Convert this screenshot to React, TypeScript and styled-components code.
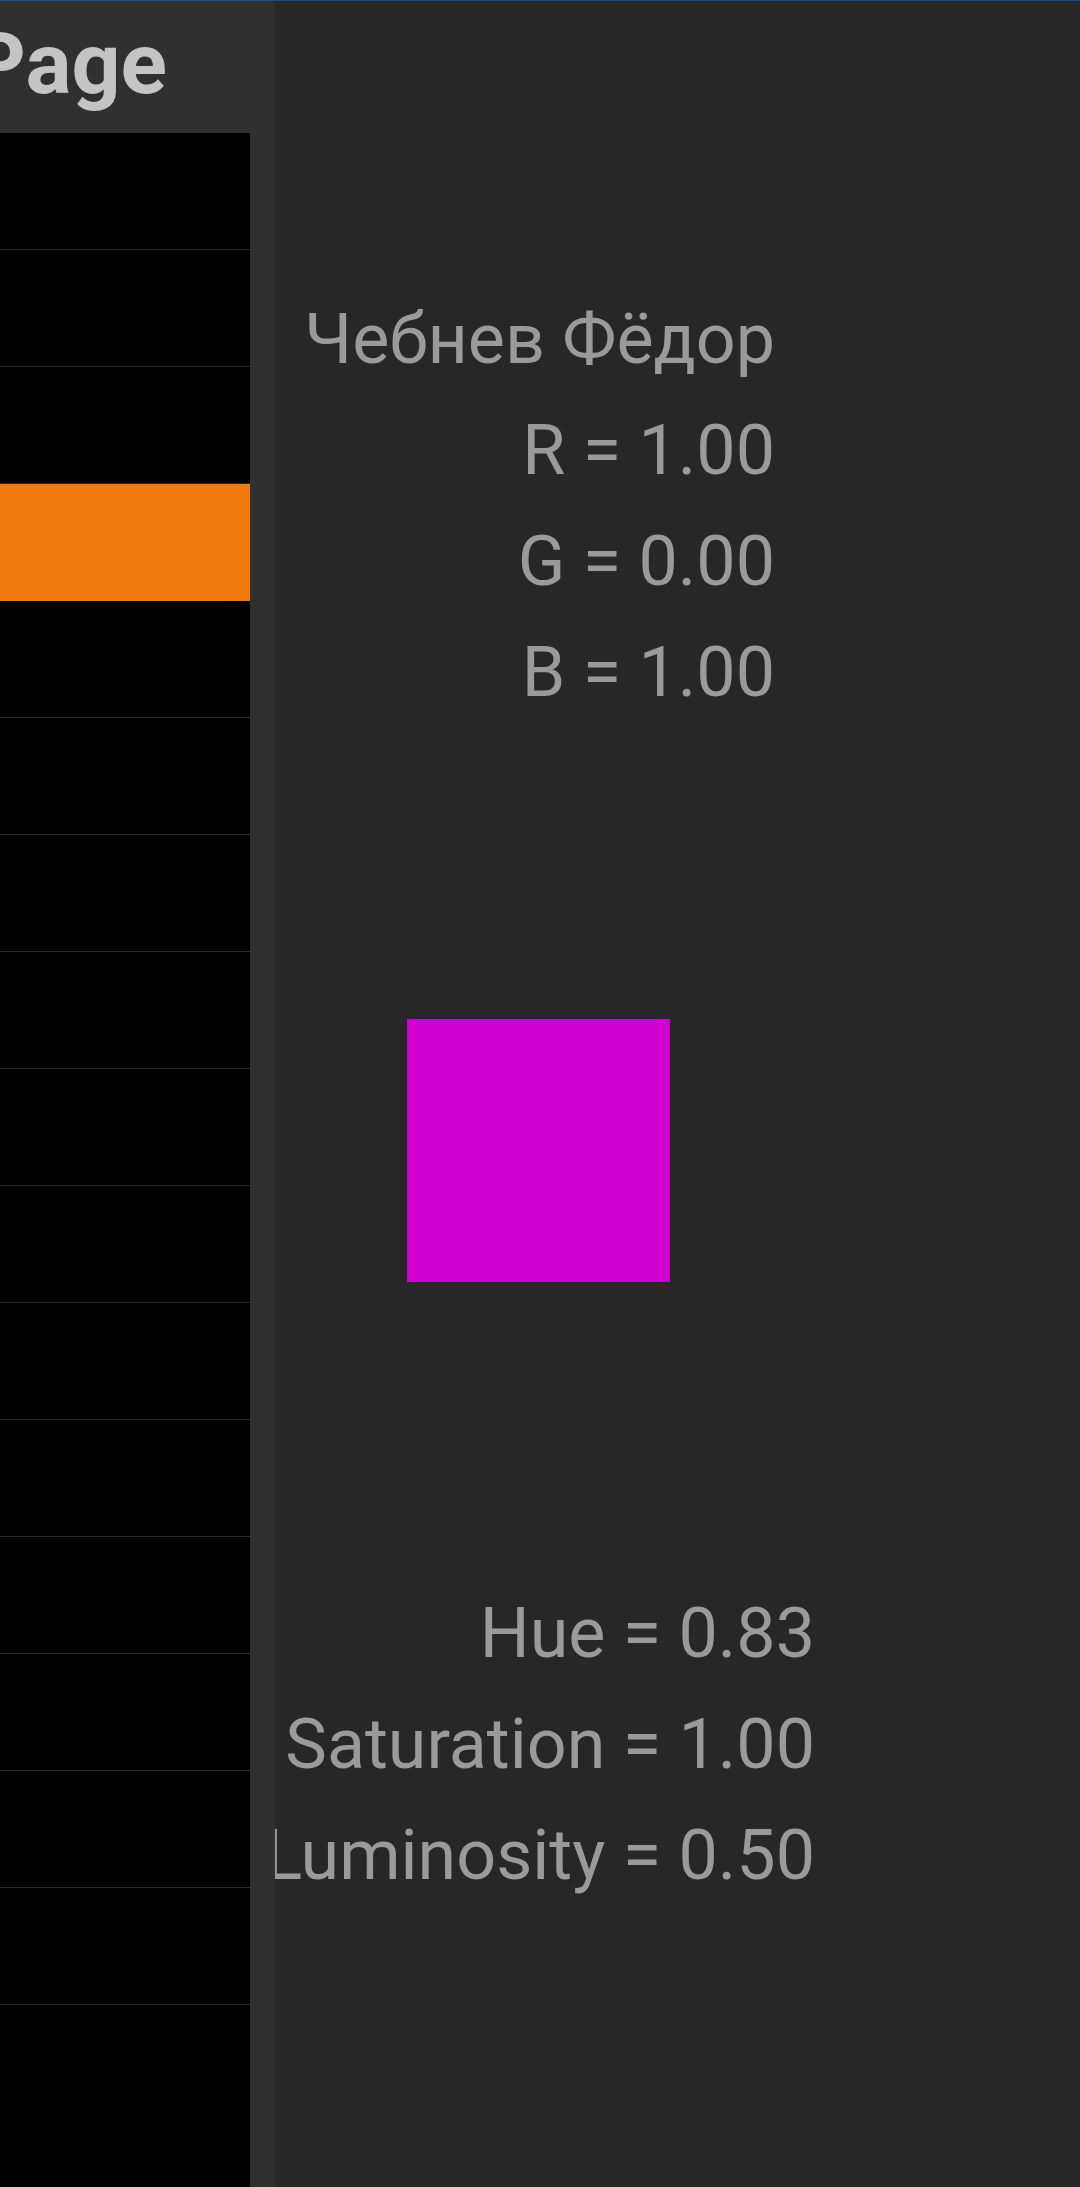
import React from "react";
import styled, { createGlobalStyle } from "styled-components";

const GlobalStyle = createGlobalStyle`
  html, body {
    margin: 0;
    padding: 0;
    background: #272727;
    overflow: hidden;
  }
  #root {
    height: 100vh;
  }
`;

const Screen = styled.div`
  display: flex;
  height: 100vh;
  box-sizing: border-box;
  border-top: 1px solid #1e4d8a;
  font-family: Roboto, "Noto Sans", "Liberation Sans", sans-serif;
  overflow: hidden;
`;

const Sidebar = styled.aside`
  flex: 0 0 275px;
  width: 275px;
  background: #303030;
  display: flex;
  flex-direction: column;
  overflow: hidden;
`;

const Header = styled.header`
  flex: 0 0 132px;
  height: 132px;
  box-sizing: border-box;
  display: flex;
  justify-content: flex-end;
  padding: 20px 108px 0 0;
  overflow: hidden;
`;

const Title = styled.h1`
  margin: 0;
  font-size: 86px;
  line-height: 1;
  font-weight: 700;
  color: #c4c4c4;
  white-space: nowrap;
  flex-shrink: 0;
`;

const List = styled.ul`
  margin: 0;
  padding: 0;
  list-style: none;
  width: 250px;
  flex: 1;
  background: #000;
  overflow: hidden;
`;

const Row = styled.li<{ $active?: boolean }>`
  height: 116px;
  border-bottom: 1px solid ${(p) => (p.$active ? "#f0790d" : "#2a2a2a")};
  background: ${(p) => (p.$active ? "#f0790d" : "#000")};

  &:last-child {
    border-bottom-color: transparent;
  }
`;

const Main = styled.main`
  flex: 1;
  display: flex;
  flex-direction: column;
  padding-top: 283px;
  overflow: hidden;
`;

const InfoBlock = styled.div<{ $width: number }>`
  width: ${(p) => p.$width}px;
  display: flex;
  flex-direction: column;
  align-items: flex-end;
  overflow: hidden;
`;

const InfoLine = styled.div`
  font-size: 70px;
  line-height: 111px;
  color: #9a9a9a;
  white-space: nowrap;
  flex-shrink: 0;
`;

const Swatch = styled.div`
  width: 263px;
  height: 263px;
  margin: 291px 0 296px 132px;
  background: #d000d0;
`;

const rows = Array.from({ length: 17 }, (_, i) => i);

export default function App() {
  return (
    <>
      <GlobalStyle />
      <Screen>
        <Sidebar>
          <Header>
            <Title>Page</Title>
          </Header>
          <List>
            {rows.map((i) => (
              <Row key={i} $active={i === 3} />
            ))}
          </List>
        </Sidebar>
        <Main>
          <InfoBlock $width={500}>
            <InfoLine>Чебнев Фёдор</InfoLine>
            <InfoLine>R = 1.00</InfoLine>
            <InfoLine>G = 0.00</InfoLine>
            <InfoLine>B = 1.00</InfoLine>
          </InfoBlock>
          <Swatch />
          <InfoBlock $width={540}>
            <InfoLine>Hue = 0.83</InfoLine>
            <InfoLine>Saturation = 1.00</InfoLine>
            <InfoLine>Luminosity = 0.50</InfoLine>
          </InfoBlock>
        </Main>
      </Screen>
    </>
  );
}
